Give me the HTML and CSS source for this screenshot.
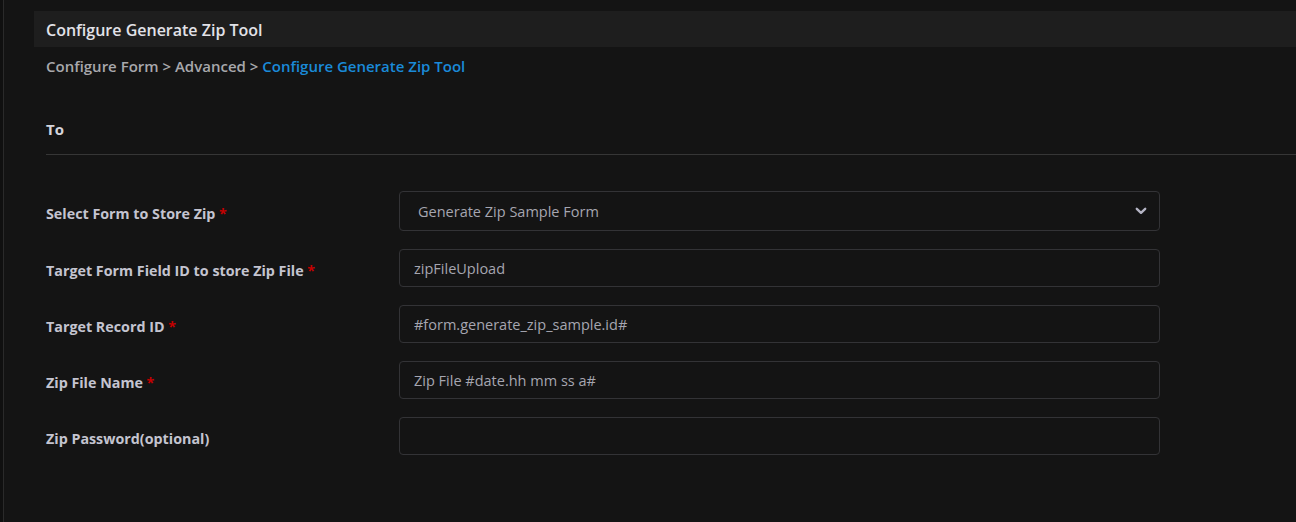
FILE: index.html
```html
<!DOCTYPE html>
<html>
<head>
<meta charset="utf-8">
<link rel="stylesheet" href="styles.css">
</head>
<body>
<div class="app">
  <div class="rail"></div>
  <main class="main">
    <div class="header">Configure Generate Zip Tool</div>
    <div class="content">
      <div class="crumbs">Configure Form &gt; Advanced &gt; <span class="crumb-active">Configure Generate Zip Tool</span></div>
      <div class="section-title">To</div>
      <div class="form">
        <div class="row">
          <label class="label">Select Form to Store Zip <span class="req">*</span></label>
          <div class="control select">
            <span class="select-text">Generate Zip Sample Form</span>
            <svg class="chev" width="12" height="8" viewBox="0 0 12 8"><path d="M1.8 1.8 L6 5.8 L10.2 1.8" fill="none" stroke="#b4b4c4" stroke-width="2.4" stroke-linecap="round" stroke-linejoin="round"/></svg>
          </div>
        </div>
        <div class="row">
          <label class="label">Target Form Field ID to store Zip File <span class="req">*</span></label>
          <div class="control input">zipFileUpload</div>
        </div>
        <div class="row">
          <label class="label">Target Record ID <span class="req">*</span></label>
          <div class="control input">#form.generate_zip_sample.id#</div>
        </div>
        <div class="row">
          <label class="label">Zip File Name <span class="req">*</span></label>
          <div class="control input">Zip File #date.hh mm ss a#</div>
        </div>
        <div class="row">
          <label class="label">Zip Password(optional)</label>
          <div class="control input"></div>
        </div>
      </div>
    </div>
  </main>
</div>
</body>
</html>
```

FILE: styles.css
```css
html, body {
  margin: 0;
  padding: 0;
  background: #141414;
  height: 100%;
}
body {
  font-family: "Open Sans", "Noto Sans", sans-serif;
  color: #c8c8d0;
}
.app {
  display: flex;
  min-height: 522px;
}
.rail {
  width: 3px;
  background: #101010;
  border-right: 1px solid #2a2a2a;
  flex: none;
}
.main {
  flex: 1;
  padding-left: 30px;
  padding-top: 11px;
}
.header {
  height: 36px;
  background: #1e1e1e;
  padding-left: 12px;
  display: flex;
  align-items: center;
  font-size: 16px;
  font-weight: 600;
  color: #e2e2e8;
  padding-top: 1px;
  box-sizing: border-box;
}
.content {
  padding-left: 12px;
}
.crumbs {
  margin-top: 9px;
  font-size: 15px;
  font-weight: 600;
  color: #a8a8ac;
  line-height: 21px;
}
.crumb-active {
  color: #1a8ad8;
}
.section-title {
  margin-top: 42px;
  font-size: 15px;
  font-weight: 700;
  color: #d4d4dc;
  line-height: 20px;
  padding-bottom: 15px;
  border-bottom: 1px solid #363636;
}
.form {
  padding-top: 36px;
  display: flex;
  flex-direction: column;
  gap: 18px;
}
.row {
  display: flex;
  align-items: center;
}
.label {
  width: 353px;
  flex: none;
  font-size: 14.3px;
  font-weight: 700;
  color: #c4c4d0;
  padding-top: 5px;
}
.req {
  color: #c40000;
}
.control {
  width: 761px;
  box-sizing: border-box;
  border: 1px solid #333336;
  border-radius: 4px;
  height: 38px;
  display: flex;
  align-items: center;
  font-size: 14.5px;
  color: #a6a6b0;
}
.input {
  padding-left: 14px;
}
.select {
  height: 40px;
  padding-left: 18px;
  padding-right: 12px;
  justify-content: space-between;
}
.chev {
  display: block;
}
```
